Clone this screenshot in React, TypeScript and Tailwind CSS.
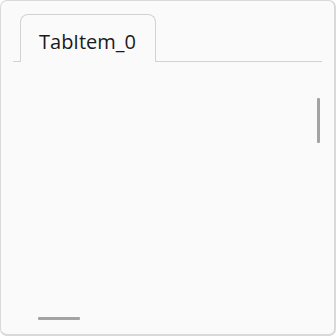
export default function App() {
  return (
    <div className="relative h-[336px] w-[336px] overflow-hidden rounded-[7px] border border-r-2 border-b-2 border-[#d9d9d9] bg-[#fafafa] pt-[13px] px-[12px]">
      {/* tab strip */}
      <div className="flex border-b border-[#d2d2d2] pl-[7px]">
        <div
          className="-mb-px flex h-[48px] w-[136px] items-center rounded-t-[8px] border border-b-0 border-[#d2d2d2] bg-[#fafafa] pl-[18px] pt-[6px] text-[20px] text-[#1a1a1a]"
          style={{ fontFamily: '"Open Sans", "Noto Sans", sans-serif' }}
        >
          TabItem_0
        </div>
      </div>

      {/* overlay scroll thumbs */}
      <div className="absolute left-[316px] top-[97px] h-[45px] w-[3px] rounded-[1px] bg-[#a3a3a3]" />
      <div className="absolute left-[37px] top-[316px] h-[3px] w-[42px] rounded-[1px] bg-[#a3a3a3]" />
    </div>
  );
}
